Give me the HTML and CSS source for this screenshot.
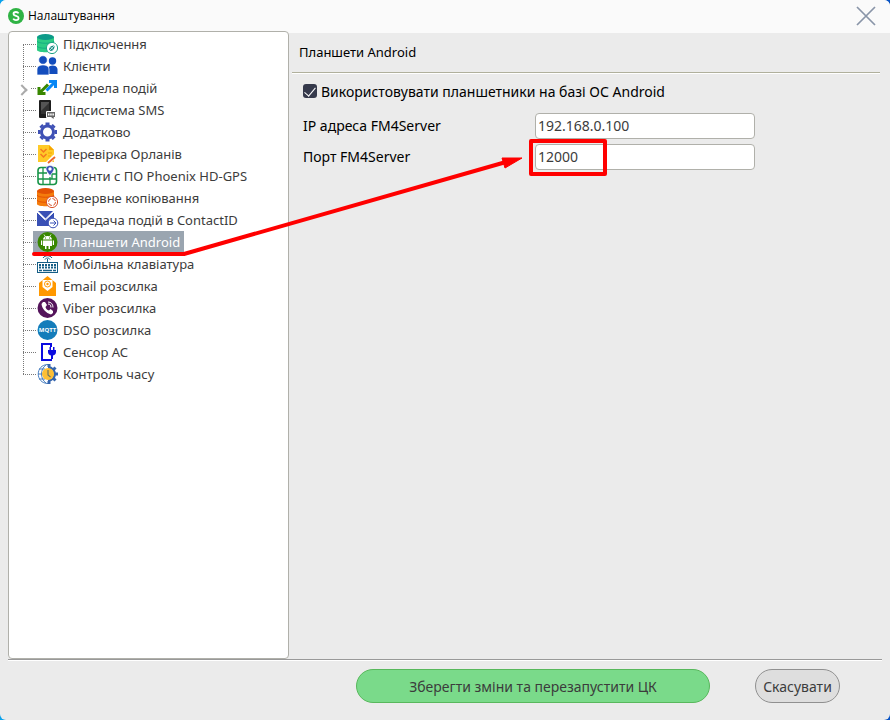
FILE: index.html
```
<!DOCTYPE html>
<html lang="uk">

<head>
    <meta charset="UTF-8">
    <meta name="viewport" content="width=device-width, initial-scale=1.0">
    <title>Налаштування</title>
    <link rel="stylesheet" href="styles.css">
</head>

<body>
    <div class="window">
        <header class="title-bar">
            <svg class="logo" viewBox="0 0 16 16">
                <circle cx="8" cy="8" r="8" fill="#2fb344" />
                <path d="M10.6 5.4C10 4.4 9 4 8 4C6.500 4 5.500 4.800 5.500 5.900C5.500 8.400 10.600 7.400 10.600 10C10.600 11.300 9.500 12.100 8 12.100C6.800 12.100 5.800 11.600 5.200 10.600" fill="none" stroke="#fff" stroke-width="1.8" />
            </svg>
            <h1>Налаштування</h1>
            <button class="close-button" aria-label="Закрити">
                <svg viewBox="0 0 20 20"><path d="M1 1L19 19M19 1L1 19" stroke="#8995a8" stroke-width="1.7" /></svg>
            </button>
        </header>

        <main class="content">
            <nav class="tree">
                <ul>
                    <li><a href="#connect">
                        <svg class="icon" viewBox="0 0 22 22">
                            <path d="M0 4V17C0 20 17 20 17 17V4Z" fill="#2ecc85" />
                            <ellipse cx="8.500" cy="4" rx="8.500" ry="3" fill="#0c9a88" />
                            <path d="M0 8C0 11 17 11 17 8M0 13C0 16 17 16 17 13" fill="none" stroke="#15ad80" />
                            <circle cx="15" cy="15" r="5.600" fill="#fff" stroke="#20a486" />
                            <path d="M12.500 17.500C11 15.500 14 12 17.500 12.500C18 16 15 19 12.500 17.500Z" fill="#178b82" />
                            <path d="M11 19L19 11M13.500 14L16 16.500" stroke="#fff" stroke-width=".7" />
                        </svg><span>Підключення</span></a></li>
                    <li><a href="#clients">
                        <svg class="icon" viewBox="0 0 22 22" fill="#134dbd">
                            <circle cx="15.500" cy="6" r="3.700" />
                            <path d="M11 19V13C12 9.500 20 9.500 20.500 14V19Z" />
                            <circle cx="6" cy="5" r="4.300" stroke="#fff" stroke-width=".7" />
                            <path d="M0 20V14C0 8.500 12 8.500 12 14V20Z" stroke="#fff" stroke-width=".7" />
                        </svg><span>Клієнти</span></a></li>
                    <li class="expandable"><a href="#sources">
                        <svg class="icon" viewBox="0 0 22 22" fill="none" stroke-width="3">
                            <path d="M12 4.500H18.500V11M18 5L9.500 13.500" stroke="#0787f5" />
                            <path d="M2 10V16.500H8.500M2.500 16L11 7.500" stroke="#388700" />
                        </svg><span>Джерела подій</span></a></li>
                    <li><a href="#sms">
                        <svg class="icon" viewBox="0 0 22 22">
                            <rect x="2" y="1" width="12" height="18" rx="1" fill="#1d1d1d" />
                            <path d="M4 3H12V15H4Z" fill="#555" />
                            <path d="M4 12L12 4V15H4Z" fill="#333" />
                            <path d="M9.500 12.500H18.500V18.500H17V21L14 18.500H9.500Z" fill="#666" stroke="#fff" />
                            <path d="M11 15.500H17" stroke="#fff" stroke-width="2" stroke-dasharray="1.500 .7" />
                        </svg><span>Підсистема SMS</span></a></li>
                    <li><a href="#extra">
                        <svg class="icon" viewBox="0 0 22 22" fill="none" stroke="#3f51b5">
                            <circle cx="10.500" cy="11" r="6" stroke-width="3" />
                            <path d="M10.500 1.500V4M10.500 18V20.500M1 11H3.500M17.500 11H20M3.800 4.300L5.500 6M15.500 16L17.200 17.700M17.200 4.300L15.500 6M5.500 16L3.800 17.700" stroke-width="4" />
                        </svg><span>Додатково</span></a></li>
                    <li><a href="#check">
                        <svg class="icon" viewBox="0 0 22 22">
                            <path d="M1 2H12L17 7V19H1Z" fill="#ffca28" />
                            <path d="M12 2V7H17Z" fill="#f7a600" />
                            <path d="M11 10H15M11 13H14" stroke="#f7a600" />
                            <path d="M3.500 6L6.500 9L9.500 6M3.500 11L6.500 14L9.500 11" fill="none" stroke="#f47920" stroke-width="1.500" />
                            <path d="M10 21L18 13" stroke="#fff" stroke-width="4" />
                            <path d="M11 20L18 14" stroke="#ed672a" stroke-width="2" />
                        </svg><span>Перевірка Орланів</span></a></li>
                    <li><a href="#phoenix">
                        <svg class="icon" viewBox="0 0 22 22">
                            <rect x="1" y="2.500" width="18.500" height="17" rx="3" fill="#fff" stroke="#169447" stroke-width="1.600" />
                            <path d="M6 3V19M13 12V19M1 8H10M1 14H19M15 9V14M15 9H19" fill="none" stroke="#169447" stroke-width="1.300" />
                            <path d="M13 10.500C10 7 9 5 9 3.500C10 -.5 16 -.5 17 3.500C17 5 16 7 13 10.500Z" fill="#3950b5" stroke="#fff" stroke-width=".5" />
                            <circle cx="13" cy="4" r="1.700" fill="#fff" />
                        </svg><span>Клієнти с ПО Phoenix HD-GPS</span></a></li>
                    <li><a href="#backup">
                        <svg class="icon" viewBox="0 0 22 22">
                            <path d="M0 4V17C0 20 17 20 17 17V4Z" fill="#f57c0c" />
                            <ellipse cx="8.500" cy="4" rx="8.500" ry="3" fill="#e35204" />
                            <path d="M0 8C0 11 17 11 17 8M0 13C0 16 17 16 17 13" fill="none" stroke="#e35204" />
                            <circle cx="15" cy="15" r="5.600" fill="#fff" stroke="#d9532b" />
                            <circle cx="15" cy="15" r="3.500" fill="none" stroke="#d9532b" stroke-dasharray="4 1.500" />
                        </svg><span>Резервне копіювання</span></a></li>
                    <li><a href="#contactid">
                        <svg class="icon" viewBox="0 0 22 22">
                            <path d="M0 3L8 11L17 3V17H0Z" fill="#3950b5" />
                            <path d="M1 2H16L8.500 9.500Z" fill="#3950b5" />
                            <path d="M0 3L8.500 11L17 3" fill="none" stroke="#fff" />
                            <circle cx="16" cy="14" r="4.800" fill="#fff" stroke="#3950b5" />
                            <path d="M13 14H19M16.500 11.500L19 14L16.500 16.500" fill="none" stroke="#3950b5" />
                        </svg><span>Передача подій в ContactID</span></a></li>
                    <li><a href="#android" class="selected" aria-current="page">
                        <svg class="icon" viewBox="0 0 22 22">
                            <circle cx="10.500" cy="11" r="10" fill="#388700" />
                            <path d="M6 8.500C6 3.800 15 3.800 15 8.500ZM6 9.500H15V15H13V18H11.500V15H9.500V18H8V15H6ZM4 9.500H5.200V14H4ZM15.800 9.500H17V14H15.800Z" fill="#fff" />
                            <path d="M7 3.500L8.500 6M14 3.500L12.500 6" stroke="#fff" stroke-width=".8" />
                            <path d="M8 7H9M12 7H13" stroke="#388700" />
                        </svg><span>Планшети Android</span></a></li>
                    <li><a href="#keyboard">
                        <svg class="icon" viewBox="0 0 22 22" fill="none" stroke="#155e86">
                            <path d="M6 5C8 2 13 2 15 5M8 6.500C9 4.500 12 4.500 13 6.500M10.500 6V10" />
                            <rect x=".5" y="9.500" width="20" height="10" fill="#fff" />
                            <path d="M2 12H19M2 14.500H19" stroke-width="2" stroke-dasharray="2 1" />
                            <path d="M2 17.500H5M6 17.500H15M16 17.500H19" stroke-width="1.500" />
                        </svg><span>Мобільна клавіатура</span></a></li>
                    <li><a href="#email">
                        <svg class="icon" viewBox="0 0 22 22">
                            <path d="M2 8L10.500 1L19 8V21H2Z" fill="#ff9800" />
                            <path d="M5.500 5H15.500V12L10.500 16L5.500 12Z" fill="#fff" />
                            <circle cx="10.500" cy="9" r="3" fill="none" stroke="#ff9800" />
                            <circle cx="10.500" cy="9" r="1.200" fill="#ff9800" />
                        </svg><span>Email розсилка</span></a></li>
                    <li><a href="#viber">
                        <svg class="icon" viewBox="0 0 22 22">
                            <circle cx="10.500" cy="11" r="10" fill="#54145b" />
                            <path d="M6 5L8 5L10 8L8.500 10C9 12 10 13 12 13.500L13.500 12L16 14V16L14 17.500C9 16 5 12 4.500 7Z" fill="#fff" />
                            <path d="M11 5C14 5 16 7 16 10.500M11 7C13 7 14 8 14 10.500" fill="none" stroke="#fff" />
                        </svg><span>Viber розсилка</span></a></li>
                    <li><a href="#dso">
                        <svg class="icon" viewBox="0 0 22 22">
                            <circle cx="10.500" cy="11" r="10" fill="#147cba" />
                            <text x="10.500" y="13" class="mqtt">MQTT</text>
                        </svg><span>DSO розсилка</span></a></li>
                    <li><a href="#sensor">
                        <svg class="icon" viewBox="0 0 22 22">
                            <path d="M14 6V3H5V19H14V18" fill="none" stroke="#0b0be0" stroke-width="2" />
                            <path d="M11 9H19V11C19 13 18 14 16 14.500V18H14V14.500C12 14 11 13 11 11ZM12.500 6H14V9H12.500ZM16 6H17.500V9H16Z" fill="#0b0be0" />
                        </svg><span>Сенсор АС</span></a></li>
                    <li><a href="#time">
                        <svg class="icon" viewBox="0 0 22 22">
                            <g fill="none" stroke="#4a7fc0">
                                <path d="M11 1.500C-2 1.500 -2 20.500 11 20.500M9 2C3 6 3 16 9 20M1 11H6M2 6H8M2 16H8" />
                                <path d="M11 4.500C20 4.500 20 17.500 11 17.500" stroke="#3565ad" stroke-width="2.500" />
                                <path d="M12 1V4M18.500 4.500L16.500 6.500M21 11H18M18.500 17.500L16.500 15.500M12 21V18" stroke="#3565ad" stroke-width="3" />
                            </g>
                            <circle cx="11" cy="11" r="6" fill="#fdbf35" />
                            <path d="M11 7V12L13.500 14" fill="none" stroke="#6e7661" stroke-width="1.200" />
                        </svg><span>Контроль часу</span></a></li>
                </ul>
            </nav>

            <section class="settings">
                <h2>Планшети Android</h2>
                <form id="settings-form">
                    <label class="check-row"><input type="checkbox" checked>Використовувати планшетники на базі ОС Android</label>
                    <div class="field">
                        <label for="ip">IP адреса FM4Server</label>
                        <input type="text" id="ip" value="192.168.0.100">
                    </div>
                    <div class="field">
                        <label for="port">Порт FM4Server</label>
                        <input type="text" id="port" value="12000">
                    </div>
                </form>
            </section>
        </main>

        <footer class="buttons">
            <button class="save-button" type="submit" form="settings-form">Зберегти зміни та перезапустити ЦК</button>
            <button class="cancel-button" type="button">Скасувати</button>
        </footer>

        <!-- Hint: from the menu item to the port field -->
        <svg class="hint" viewBox="0 0 620 270" fill="none" stroke="#f00">
            <path d="M34 254L184 254L506 162" stroke-width="4" stroke-linecap="round" stroke-linejoin="round" />
            <path d="M502 158L522 158L505 168Z" fill="#f00" stroke-width="1" />
            <rect x="531" y="141" width="74" height="33" stroke-width="4" stroke-linejoin="round" />
        </svg>
    </div>
</body>

</html>
```
FILE: styles.css
```
* {
    box-sizing: border-box;
}

body {
    margin: 0;
    font-family: "Noto Sans", sans-serif;
    font-size: 14px;
    color: #000;
    background: linear-gradient(90deg, #0aa2ec, #0753c4);
}

h1,
h2 {
    margin: 0;
    font-weight: normal;
}

.window {
    position: relative;
    display: flex;
    flex-direction: column;
    min-height: 100vh;
    background-color: #ebebeb;
    border-radius: 6px;
    overflow: hidden;
}

.title-bar {
    display: flex;
    align-items: center;
    height: 33px;
    padding: 0 14px 2px 8px;
    background-color: #fafafa;
}

.title-bar h1 {
    margin-left: 4px;
    font-family: "Open Sans", sans-serif;
    font-size: 12px;
}

.logo {
    width: 16px;
    height: 16px;
}

.close-button {
    width: 20px;
    height: 20px;
    margin-left: auto;
    padding: 0;
    border: none;
    background: none;
}

.close-button svg {
    display: block;
}

.content {
    display: flex;
    flex: 1;
    margin: 0 8px;
    border-bottom: 1px solid #999;
    box-shadow: 0 1px #fff;
}

/* Tree */
.tree {
    width: 281px;
    margin-top: -2px;
    padding-top: 1px;
    background-color: #fff;
    border: 1px solid #b0b0aa;
    border-radius: 4px;
    font-size: 13px;
}

.tree ul {
    position: relative;
    margin: 0;
    padding: 0 0 0 14px;
    list-style: none;
}

/* Dotted branches of the tree */
.tree ul::before {
    content: "";
    position: absolute;
    top: 11px;
    bottom: 11px;
    left: 14px;
    border-left: 1px dotted #777;
}

.tree li {
    position: relative;
    display: flex;
    height: 22px;
    padding-left: 10px;
}

.tree li::after {
    content: "";
    position: absolute;
    top: 11px;
    left: 0;
    width: 13px;
    border-top: 1px dotted #777;
}

.tree .expandable::before {
    content: "";
    position: absolute;
    top: 9px;
    left: -5px;
    width: 6px;
    height: 6px;
    background-color: #fff;
    border: solid #aaa;
    border-width: 2px 2px 0 0;
    box-shadow: 0 0 0 3px #fff;
    transform: rotate(45deg);
}

.tree .expandable::after {
    left: 8px;
    width: 5px;
}

.tree a {
    display: flex;
    align-items: center;
    padding: 0 4px;
    color: #3c3c3c;
    text-decoration: none;
    white-space: nowrap;
}

.tree span {
    padding-bottom: 1px;
}

.tree .selected {
    background-color: #9aa5b0;
    color: #fff;
}

.icon {
    width: 22px;
    height: 22px;
    margin-right: 4px;
}

.mqtt {
    font: bold 6px "Open Sans", sans-serif;
    fill: #fff;
    text-anchor: middle;
}

/* Settings */
.settings {
    flex: 1;
    padding: 0 2px 0 3px;
}

.settings h2 {
    height: 40px;
    padding-left: 7px;
    border-bottom: 1px solid #b0b09c;
    box-shadow: 0 1px #fff;
    font-size: 13px;
    line-height: 38px;
}

form {
    padding: 8px 11px;
}

.check-row {
    display: flex;
    align-items: center;
    height: 20px;
    margin-bottom: 12px;
}

.check-row input {
    appearance: none;
    display: grid;
    place-items: center;
    width: 14px;
    height: 14px;
    margin: 0 4px 0 0;
    background-color: #35394b;
    border-radius: 3px;
}

.check-row input:checked::before {
    content: "";
    width: 5px;
    height: 10px;
    margin-bottom: 2px;
    border: solid #fff;
    border-width: 0 1px 1px 0;
    transform: rotate(40deg);
}

.field {
    display: flex;
    align-items: center;
    margin-bottom: 5px;
}

.field label {
    width: 232px;
    padding-bottom: 2px;
}

.field input {
    width: 220px;
    height: 26px;
    padding: 0 2px 2px;
    border: 1px solid #b0b0aa;
    border-radius: 4px;
    background-color: #fff;
    color: #3c3c3c;
    font: inherit;
}

/* Bottom buttons */
.buttons {
    display: flex;
    justify-content: flex-end;
    gap: 45px;
    padding: 9px 50px 17px;
}

.buttons button {
    height: 34px;
    padding: 0;
    border: 1px solid #909090;
    border-radius: 17px;
    background-color: #dedede;
    color: #3c3c3c;
    font: inherit;
}

.buttons .save-button {
    width: 354px;
    background-color: #7ada8a;
    border-color: #58b85c;
}

.cancel-button {
    width: 85px;
}

.hint {
    position: absolute;
    top: 0;
    left: 0;
    width: 620px;
    height: 270px;
    pointer-events: none;
}
```
